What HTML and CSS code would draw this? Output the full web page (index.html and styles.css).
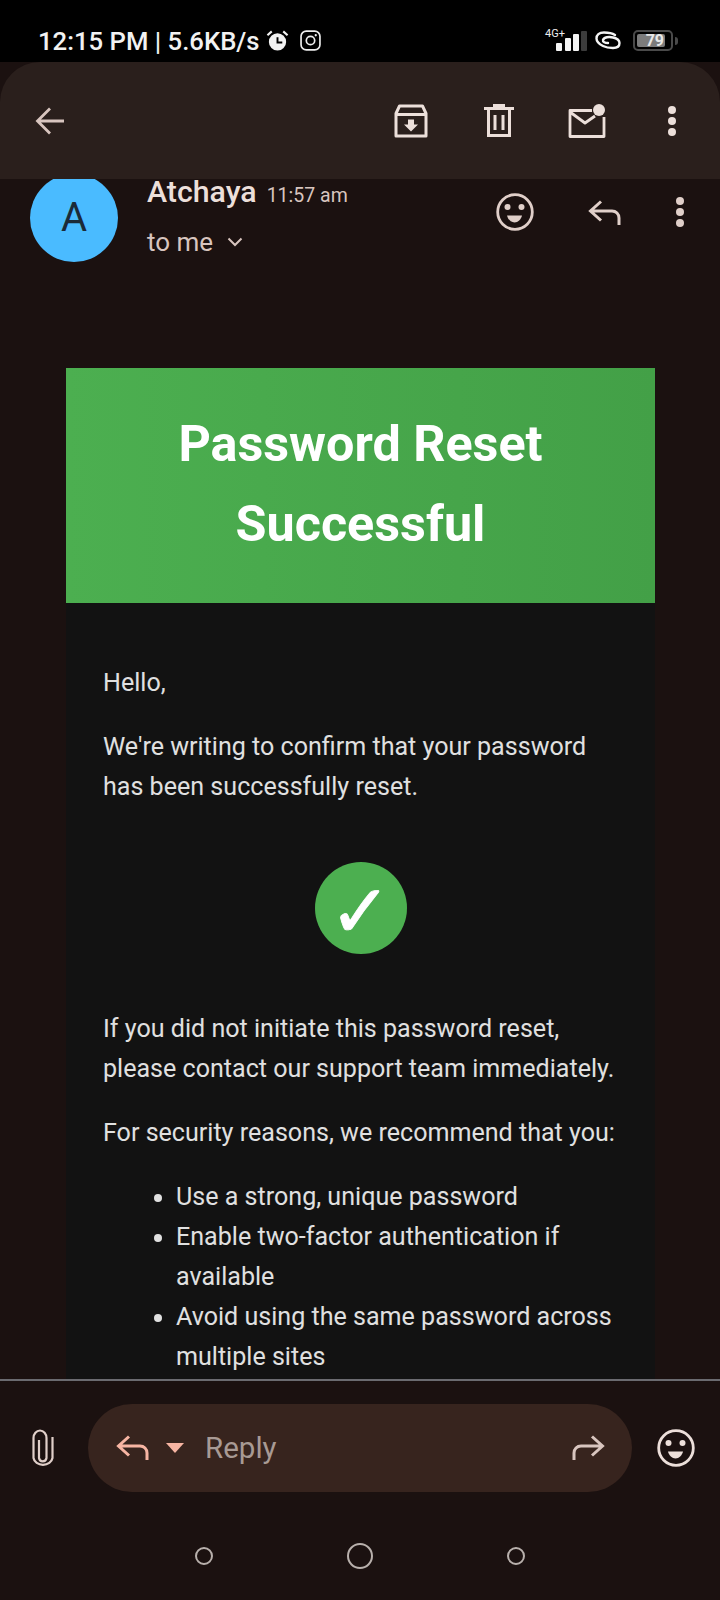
FILE: index.html
```html
<!DOCTYPE html>
<html lang="en">
<head>
<meta charset="utf-8">
<title>Password Reset Successful</title>
<link rel="stylesheet" href="styles.css">
</head>
<body>
<div class="app">
  <div class="status">
    <div class="status-left">
      <span class="status-text">12:15 PM | 5.6KB/s</span>
      <svg class="ic-alarm" viewBox="0 0 24 24" width="23" height="23"><circle cx="12" cy="13.500" r="9" fill="#f2f2f2"/><path d="M12 8.500v5.500h5" fill="none" stroke="#000" stroke-width="2"/><path d="M1.500 6.500 6 2.500M22.500 6.500 18 2.500" stroke="#f2f2f2" stroke-width="2.200" fill="none"/></svg>
      <svg class="ic-insta" viewBox="0 0 20 20" width="21" height="21"><rect x="1" y="1" width="18" height="18" rx="5" fill="none" stroke="#eee" stroke-width="1.600"/><circle cx="10" cy="10" r="4" fill="none" stroke="#eee" stroke-width="1.600"/><circle cx="15" cy="5" r="1.100" fill="#eee"/></svg>
    </div>
    <div class="status-right">
      <div class="signal">
        <span class="net">4G+</span>
        <svg viewBox="0 0 31 20" width="31" height="20"><rect x="0" y="12" width="6" height="8" rx="1" fill="#f4f4f4"/><rect x="9" y="7" width="6" height="13" rx="1" fill="#f4f4f4"/><rect x="17" y="3" width="6" height="17" rx="1" fill="#f4f4f4"/><rect x="25" y="0" width="6" height="20" rx="1" fill="#3c3c3c"/></svg>
      </div>
      <svg class="ic-link" viewBox="0 0 26 20" width="26" height="20"><path d="M20 4C17 2 14 1.500 9 1.500 4 1.500 1.500 4 1.500 7.500 1.500 11 4 13 8 15c3 1.500 6 2 10 2 4 0 6.500-2 6.500-5 0-3-2.500-4.500-6.500-5.500-4-1-9-.5-10 2.500-.5 2 2 3 5 3" fill="none" stroke="#f4f4f4" stroke-width="2.400" stroke-linecap="round"/></svg>
      <div class="battery"><div class="battery-fill"><span>79</span></div></div>
      <div class="battery-tip"></div>
    </div>
  </div>

  <header class="topbar">
    <svg viewBox="0 0 30 28" width="30" height="28"><path d="M29 14H3M15 1.500 2.500 14 15 26.500" fill="none" stroke="#d8c5bf" stroke-width="2.800"/></svg>
    <div class="topbar-actions">
      <svg viewBox="0 0 34 34" width="34" height="34"><path d="M2 9.500 5.500 2h23L32 9.500V32H2zM2 10.500h30" fill="none" stroke="#ecdfda" stroke-width="3" stroke-linejoin="round"/><path d="M14 15.500h6v5h4l-7 7-7-7h4z" fill="#ecdfda"/></svg>
      <svg class="trash" viewBox="0 0 30 33" width="30" height="33"><path d="M0 4.500h30M9 1.500h12M4.500 5v26.500h21V5M11 11v15M19 11v15" fill="none" stroke="#ecdfda" stroke-width="3"/></svg>
      <svg class="mail-ic" viewBox="0 0 38 34" width="38" height="34"><path d="M24 6.500H2v26h34V13M2 8l15 11 10-7" fill="none" stroke="#ecdfda" stroke-width="2.800" stroke-linejoin="round"/><circle cx="31" cy="6" r="6" fill="#ecdfda"/></svg>
      <svg class="more" viewBox="0 0 10 32" width="10" height="32"><circle cx="5" cy="5" r="4" fill="#ecdfda"/><circle cx="5" cy="16" r="4" fill="#ecdfda"/><circle cx="5" cy="27" r="4" fill="#ecdfda"/></svg>
    </div>
  </header>

  <main class="thread">
    <div class="sender">
      <div class="avatar">A</div>
      <div class="sender-info">
        <div class="sender-line"><span class="sender-name">Atchaya</span><span class="sender-time">11:57 am</span></div>
        <div class="to-line"><span>to me</span><svg viewBox="0 0 16 10" width="16" height="10"><path d="M1.500 1.500 8 8l6.500-6.500" fill="none" stroke="#d8c5bf" stroke-width="2"/></svg></div>
      </div>
      <div class="sender-actions">
        <svg viewBox="0 0 38 38" width="38" height="38"><circle cx="19" cy="19" r="17.300" fill="none" stroke="#e0cfc9" stroke-width="2.800"/><circle cx="11.500" cy="14" r="3" fill="#e0cfc9"/><circle cx="25.500" cy="14" r="3" fill="#e0cfc9"/><path d="M11 22.500h15c-1 4-4 7-7.500 7s-6.500-3-7.500-7z" fill="#e0cfc9"/></svg>
        <svg viewBox="0 0 33 25" width="33" height="25"><path d="M13 1.500 2.500 11 13 20.500M2.500 11H24c4 0 7 3 7 7v7" fill="none" stroke="#e0cfc9" stroke-width="3"/></svg>
        <svg viewBox="0 0 10 32" width="10" height="32"><circle cx="5" cy="5" r="4" fill="#e0cfc9"/><circle cx="5" cy="16" r="4" fill="#e0cfc9"/><circle cx="5" cy="27" r="4" fill="#e0cfc9"/></svg>
      </div>
    </div>

    <article class="mail">
      <div class="mail-head">
        <h1>Password Reset Successful</h1>
      </div>
      <div class="mail-body">
        <p>Hello,</p>
        <p>We're writing to confirm that your password has been successfully reset.</p>
        <div class="check"><span>✓</span></div>
        <p>If you did not initiate this password reset, please contact our support team immediately.</p>
        <p>For security reasons, we recommend that you:</p>
        <ul>
          <li>Use a strong, unique password</li>
          <li>Enable two-factor authentication if available</li>
          <li>Avoid using the same password across multiple sites</li>
        </ul>
      </div>
    </article>
  </main>

  <footer class="composer">
    <svg viewBox="0 0 22 38" width="22" height="38"><path d="M20.500 8v21a9.600 8 0 0 1-19 0V9a6.500 7.500 0 0 1 13 0v20a3.800 4 0 0 1-7.500 0V11" fill="none" stroke="#e0cfc9" stroke-width="2.200"/></svg>
    <div class="reply-pill">
      <svg viewBox="0 0 33 25" width="33" height="25"><path d="M13 1.500 2.500 11 13 20.500M2.500 11H24c4 0 7 3 7 7v7" fill="none" stroke="#f7b5a3" stroke-width="3"/></svg>
      <div class="caret"></div>
      <span class="reply-text">Reply</span>
      <svg viewBox="0 0 33 25" width="33" height="25"><path d="M20 1.500 30.500 11 20 20.500M30.500 11H9c-4 0-7 3-7 7v7" fill="none" stroke="#d8c5bf" stroke-width="3"/></svg>
    </div>
    <svg viewBox="0 0 38 38" width="38" height="38"><circle cx="19" cy="19" r="17.300" fill="none" stroke="#ecdfda" stroke-width="2.800"/><circle cx="11.500" cy="14" r="3" fill="#ecdfda"/><circle cx="25.500" cy="14" r="3" fill="#ecdfda"/><path d="M11 22.500h15c-1 4-4 7-7.500 7s-6.500-3-7.500-7z" fill="#ecdfda"/></svg>
  </footer>

  <nav class="navbar">
    <div class="nav-dot"></div>
    <div class="nav-dot nav-home"></div>
    <div class="nav-dot"></div>
  </nav>
</div>
</body>
</html>
```

FILE: styles.css
```css
* { box-sizing: border-box; }
html, body { margin: 0; padding: 0; background: #000; }
body { font-family: Roboto, "Noto Sans", sans-serif; }
svg { display: block; flex: none; }
.app { width: 720px; height: 1600px; display: flex; flex-direction: column; overflow: hidden; background: #1b1110; }

.status { height: 62px; flex: none; background: #000; display: flex; justify-content: space-between; align-items: center; padding: 19px 42px 0 38px; color: #f2f2f2; }
.status-left { display: flex; align-items: center; }
.status-text { font-size: 25.700px; font-weight: 500; }
.ic-alarm { margin-left: 6px; }
.ic-insta { margin-left: 11px; }
.status-right { display: flex; align-items: center; }
.signal { position: relative; width: 31px; height: 20px; }
.net { position: absolute; right: 22px; top: -3px; font-size: 11px; line-height: 12px; color: #eee; }
.ic-link { margin-left: 8px; }
.battery { width: 40px; height: 21px; margin-left: 12px; border: 2px solid #4a4a4a; border-radius: 5px; padding: 2px; }
.battery-fill { width: 28px; height: 13px; background: #7c7c7c; border-radius: 2px; display: flex; align-items: center; justify-content: flex-end; padding-right: 1px; }
.battery-fill span { font-size: 16px; font-weight: 700; line-height: 13px; color: #e8e8e8; }
.battery-tip { width: 3px; height: 8px; margin-left: 2px; background: #4a4a4a; border-radius: 0 3px 3px 0; }

.topbar { height: 117px; flex: none; background: #2a1f1c; border-radius: 40px 40px 0 0; display: flex; align-items: center; justify-content: space-between; padding: 0 43px 0 35px; position: relative; z-index: 2; }
.topbar-actions { display: flex; align-items: center; }
.trash { margin-left: 56px; }
.mail-ic { margin-left: 54px; }
.more { margin-left: 61px; }

.thread { flex: 1; min-height: 0; }
.sender { height: 194px; margin-top: -5px; display: flex; align-items: flex-start; padding: 0 35px 0 30px; }
.avatar { width: 88px; height: 88px; flex: none; border-radius: 50%; background: #4abbff; color: #1b2a38; font-size: 40px; line-height: 88px; text-align: center; }
.sender-info { margin-left: 29px; flex: 1; color: #ecdfda; }
.sender-line { display: flex; align-items: baseline; gap: 10px; line-height: 26px; margin-top: 5px; }
.sender-name { font-size: 30.300px; font-weight: 500; }
.sender-time { font-size: 19.500px; color: #d8c5bf; }
.to-line { display: flex; align-items: center; gap: 14px; font-size: 26px; color: #d8c5bf; margin-top: 18px; line-height: 30px; }
.sender-actions { display: flex; align-items: center; gap: 54px; margin-top: 19px; }

.mail { margin: 0 65px 0 66px; background: #121212; }
.mail-head { height: 235px; background: linear-gradient(90deg, #4caf50, #43a047); display: flex; align-items: center; justify-content: center; padding: 0 60px 3px; }
.mail-head h1 { margin: 0; font-size: 50.300px; line-height: 80px; font-weight: 700; color: #fff; text-align: center; }
.mail-body { padding: 60px 37px 40px; color: #e0e0e0; font-size: 25.080px; line-height: 40px; }
.mail-body p { margin: 0 0 24px; }
.check { width: 92px; height: 92px; border-radius: 50%; background: #4caf50; margin: 55px auto 55px; display: flex; align-items: center; justify-content: center; }
.check span { color: #fff; font-size: 74px; line-height: 92px; padding-top: 6px; font-weight: 700; font-family: "DejaVu Sans", sans-serif; -webkit-text-stroke: 0.800px #fff; }
.mail-body ul { margin: 0; padding: 0 0 0 73px; }

.composer { height: 135px; flex: none; border-top: 2px solid #6b6b70; display: flex; align-items: center; padding: 0 25px 0 32px; background: #1b1110; position: relative; z-index: 2; }
.reply-pill { margin: 0 25px 0 34px; width: 544px; height: 88px; border-radius: 44px; background: #37241e; display: flex; align-items: center; padding: 0 27px 0 28px; }
.caret { width: 0; height: 0; margin-left: 17px; border-left: 9.500px solid transparent; border-right: 9.500px solid transparent; border-top: 10px solid #f7b5a3; }
.reply-text { margin-left: 21px; font-size: 29.500px; color: #a89a94; flex: 1; }

.navbar { height: 86px; flex: none; display: flex; align-items: center; justify-content: center; gap: 134px; padding-bottom: 2px; background: #1b1110; position: relative; z-index: 2; }
.nav-dot { width: 18px; height: 18px; border: 2.500px solid #b8b0ac; border-radius: 50%; }
.nav-home { width: 26px; height: 26px; }
```
